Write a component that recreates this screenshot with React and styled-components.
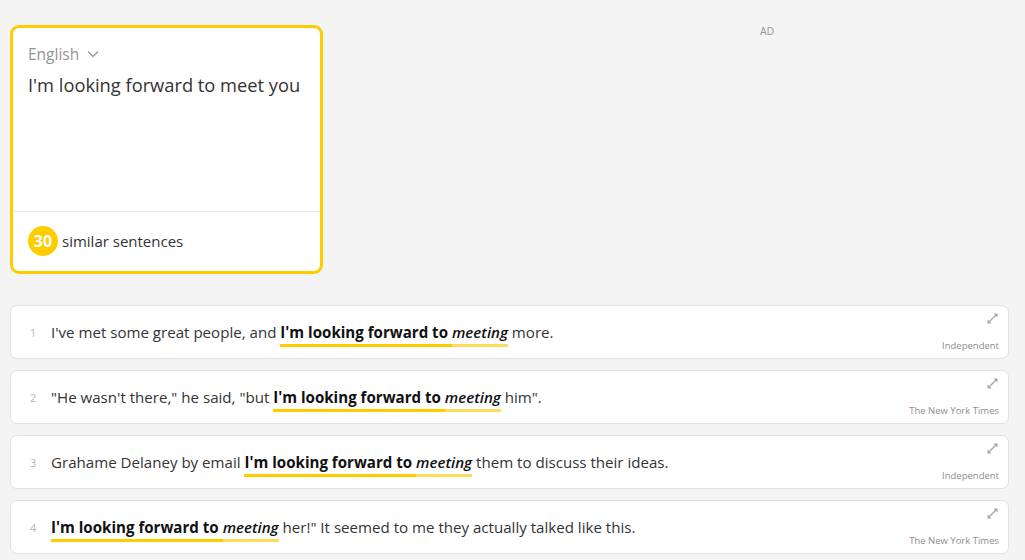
import React from "react";
import styled, { createGlobalStyle } from "styled-components";

const Global = createGlobalStyle`
  html, body { margin: 0; padding: 0; background: #f4f4f4; }
  body { font-family: "Open Sans", "Lato", sans-serif; color: #333; }
  * { box-sizing: border-box; }
`;

const Page = styled.div`
  width: 1025px;
  height: 560px;
  padding: 25px 16px 0 10px;
  overflow: hidden;
`;

const Top = styled.div`
  display: flex;
  align-items: flex-start;
  margin-bottom: 31px;
`;

const Card = styled.div`
  width: 313px;
  height: 249px;
  border: 3px solid #ffcc00;
  border-radius: 9px;
  background: #fff;
  display: flex;
  flex-direction: column;
`;

const CardBody = styled.div`
  flex: 1;
  padding: 15px 15px 0 15px;
`;

const Lang = styled.div`
  display: flex;
  align-items: center;
  gap: 8px;
  font-size: 15.5px;
  color: #959595;
  height: 22px;
`;

const Query = styled.div`
  margin-top: 7px;
  font-size: 18.3px;
  color: #333;
`;

const CardFooter = styled.div`
  height: 60px;
  border-top: 1px solid #e4e4e4;
  display: flex;
  align-items: center;
  padding: 0 15px 1px;
  gap: 4px;
  font-size: 15px;
  color: #333;
`;

const Count = styled.span`
  width: 30px;
  height: 30px;
  border-radius: 50%;
  background: #ffcc00;
  color: #fff;
  font-weight: 700;
  font-size: 16px;
  display: inline-flex;
  align-items: center;
  justify-content: center;
`;

const Ad = styled.div`
  margin-left: 437px;
  margin-top: 1px;
  font-family: "Liberation Sans", Arial, sans-serif;
  font-size: 10px;
  color: #999;
`;

const List = styled.div`
  display: flex;
  flex-direction: column;
  gap: 11px;
`;

const Row = styled.div`
  position: relative;
  height: 54px;
  background: #fff;
  border: 1px solid #e2e2e2;
  border-radius: 7px;
  display: flex;
  align-items: center;
  padding: 0 0 0 19px;
`;

const Num = styled.span`
  width: 21px;
  font-size: 11px;
  color: #b5b5b5;
`;

const Sentence = styled.span`
  font-size: 15.1px;
  color: #333;
`;

const Hl = styled.span`
  color: #111;
  border-bottom: 3px solid ${(p) => (p.$light ? "#fddc5c" : "#ffcc00")};
  padding-bottom: 2px;
  font-style: ${(p) => (p.$italic ? "italic" : "normal")};
  font-weight: ${(p) => (p.$italic ? 600 : 700)};
`;

const Source = styled.span`
  position: absolute;
  right: 9px;
  bottom: 6px;
  font-size: 9.5px;
  color: #8d8d8d;
`;

const Expand = styled.svg`
  position: absolute;
  right: 10px;
  top: 7px;
`;

const rows = [
  { pre: "I've met some great people, and ", post: " more.", src: "Independent" },
  { pre: "\"He wasn't there,\" he said, \"but ", post: " him\".", src: "The New York Times" },
  { pre: "Grahame Delaney by email ", post: " them to discuss their ideas.", src: "Independent" },
  { pre: "", post: " her!\" It seemed to me they actually talked like this.", src: "The New York Times" },
];

const ExpandIcon = () => (
  <Expand width="11" height="11" viewBox="0 0 11 11">
    <path d="M6.5 0.5 H10.5 V4.5 Z" fill="#a6a6a6" />
    <path d="M0.5 6.5 V10.5 H4.5 Z" fill="#a6a6a6" />
    <path d="M9 2 L2 9" stroke="#a6a6a6" strokeWidth="1.2" />
  </Expand>
);

export default function App() {
  return (
    <Page>
      <Global />
      <Top>
        <Card>
          <CardBody>
            <Lang>
              English
              <svg width="12" height="8" viewBox="0 0 12 8">
                <path d="M1 1.5 L6 6.5 L11 1.5" stroke="#9a9a9a" strokeWidth="1.4" fill="none" />
              </svg>
            </Lang>
            <Query>I'm looking forward to meet you</Query>
          </CardBody>
          <CardFooter>
            <Count>30</Count>
            similar sentences
          </CardFooter>
        </Card>
        <Ad>AD</Ad>
      </Top>
      <List>
        {rows.map((r, i) => (
          <Row key={i}>
            <Num>{i + 1}</Num>
            <Sentence>
              {r.pre}
              <Hl>I'm looking forward to </Hl>
              <Hl $light $italic>meeting</Hl>
              {r.post}
            </Sentence>
            <ExpandIcon />
            <Source>{r.src}</Source>
          </Row>
        ))}
      </List>
    </Page>
  );
}
